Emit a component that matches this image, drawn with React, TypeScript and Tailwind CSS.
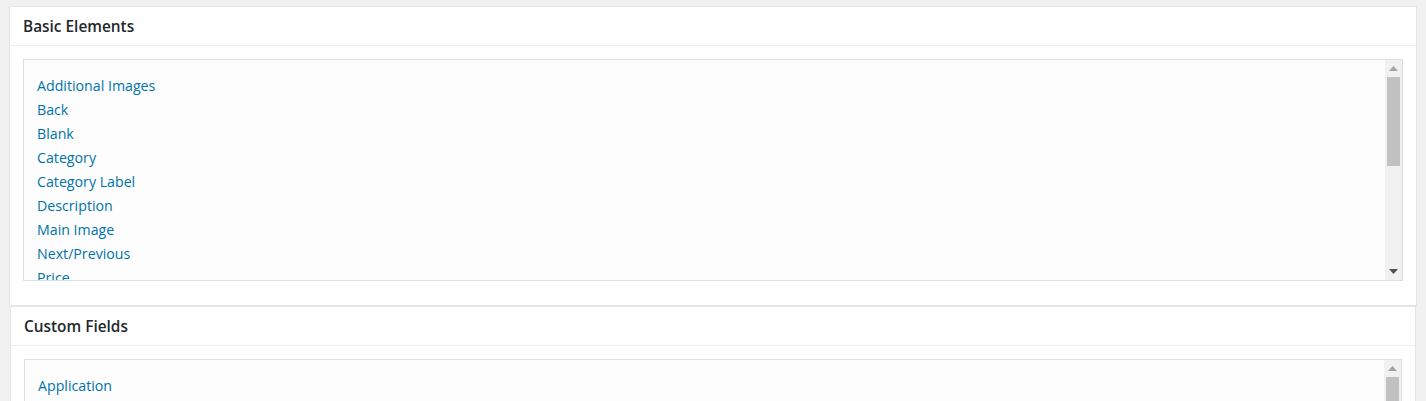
import React from "react";

const basic = [
  "Additional Images",
  "Back",
  "Blank",
  "Category",
  "Category Label",
  "Description",
  "Main Image",
  "Next/Previous",
  "Price",
  "Product Name",
  "Related Products",
  "Sale Price",
  "Short Description",
  "SKU",
  "Social Media",
  "Tags",
  "Tags Label",
  "Title",
];

const custom = [
  "Application",
  "Brand",
  "Color",
  "Dimensions",
  "Finish",
  "Material",
  "Model Number",
  "Size",
  "Specifications",
  "Warranty",
];

function Scrollbar({ thumbHeight }: { thumbHeight: number }) {
  return (
    <div className="w-[17px] shrink-0 bg-[#f1f1f1] flex flex-col">
      <div className="h-[17px] flex items-center justify-center">
        <svg width="9" height="5" viewBox="0 0 9 5">
          <path d="M4.5 0 L9 5 L0 5 Z" fill="#a3a3a3" />
        </svg>
      </div>
      <div className="flex-1 px-[2px]">
        <div className="bg-[#c1c1c1]" style={{ height: thumbHeight }} />
      </div>
      <div className="h-[17px] flex items-center justify-center">
        <svg width="9" height="5" viewBox="0 0 9 5">
          <path d="M0 0 L9 0 L4.5 5 Z" fill="#505050" />
        </svg>
      </div>
    </div>
  );
}

function Panel({
  title,
  items,
  className,
}: {
  title: string;
  items: string[];
  className: string;
}) {
  return (
    <div className={"bg-white border border-[#e5e5e5] " + className}>
      <div className="h-[39px] border-b border-[#eeeeee] flex items-center px-[13px] pt-[1px]">
        <h2 className="text-[15.4px] font-semibold text-[#23282d] leading-none">
          {title}
        </h2>
      </div>
      <div className="px-[13px] pt-[13px] pb-[24px]">
        <div className="h-[222px] border border-[#dddddd] bg-[#fdfdfd] flex overflow-hidden">
          <ul className="flex-1 pt-[14px] px-[13px] overflow-hidden">
            {items.map((it) => (
              <li key={it} className="leading-[24px] text-[14.2px]">
                <a className="text-[#0073aa] cursor-pointer">{it}</a>
              </li>
            ))}
          </ul>
          <Scrollbar thumbHeight={89} />
        </div>
      </div>
    </div>
  );
}

export default function App() {
  return (
    <div
      className="w-[1426px] h-[401px] bg-[#f1f1f1] overflow-hidden pt-[6px]"
      style={{ fontFamily: '"Open Sans", "Noto Sans", sans-serif' }}
    >
      <Panel title="Basic Elements" items={basic} className="ml-[9px] w-[1408px]" />
      <Panel title="Custom Fields" items={custom} className="ml-[10px] w-[1406px]" />
    </div>
  );
}
